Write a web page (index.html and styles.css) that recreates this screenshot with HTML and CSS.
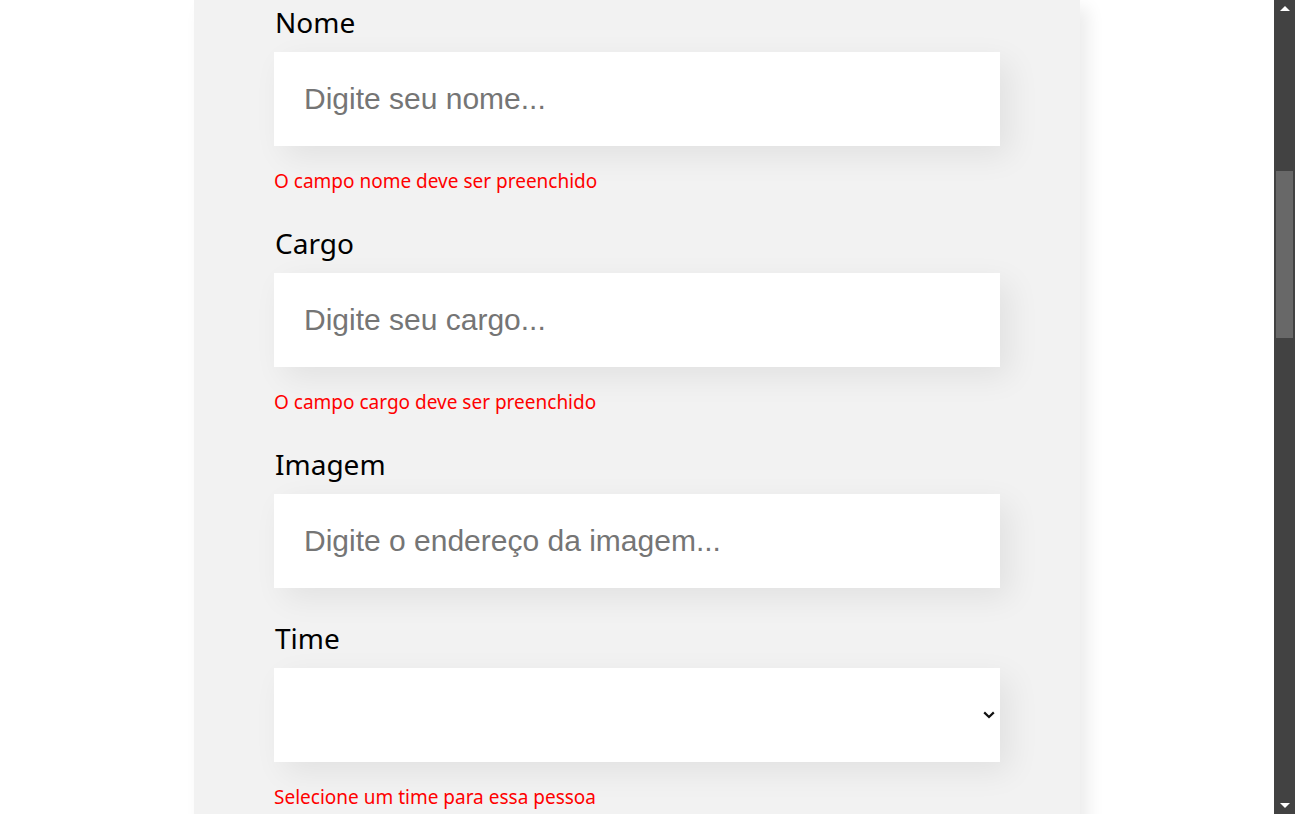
FILE: index.html
```html
<!DOCTYPE html>
<html lang="pt-BR">
<head>
<meta charset="utf-8">
<title>Formulário</title>
<link rel="stylesheet" href="styles.css">
</head>
<body>
<div class="window">
  <main class="viewport">
    <form class="panel">
      <div class="field">
        <label class="label" for="nome">Nome</label>
        <input class="input" id="nome" type="text" placeholder="Digite seu nome...">
        <p class="error">O campo nome deve ser preenchido</p>
      </div>
      <div class="field">
        <label class="label" for="cargo">Cargo</label>
        <input class="input" id="cargo" type="text" placeholder="Digite seu cargo...">
        <p class="error">O campo cargo deve ser preenchido</p>
      </div>
      <div class="field">
        <label class="label" for="imagem">Imagem</label>
        <input class="input" id="imagem" type="text" placeholder="Digite o endereço da imagem...">
      </div>
      <div class="field">
        <label class="label" for="time">Time</label>
        <div class="select-wrap">
          <select class="input select" id="time">
            <option value=""></option>
          </select>
          <svg class="chevron" width="12" height="8" viewBox="0 0 12 8" aria-hidden="true">
            <path d="M1.2 1.4 L6 6 L10.8 1.4" fill="none" stroke="#111" stroke-width="2.2" stroke-linecap="butt" stroke-linejoin="miter"/>
          </svg>
        </div>
        <p class="error">Selecione um time para essa pessoa</p>
      </div>
    </form>
  </main>
  <div class="scrollbar">
    <div class="sb-btn"><span class="arrow-up"></span></div>
    <div class="sb-track"><div class="sb-thumb"></div></div>
    <div class="sb-btn"><span class="arrow-down"></span></div>
  </div>
</div>
</body>
</html>
```
FILE: styles.css
```css
html, body {
  margin: 0;
  padding: 0;
  height: 814px;
  overflow: hidden;
  background: #ffffff;
}

.window {
  display: flex;
  height: 814px;
}

.viewport {
  flex: 1;
  overflow: hidden;
  height: 814px;
}

.panel {
  width: 886px;
  box-sizing: border-box;
  margin: 0 auto;
  padding: 6px 80px 0;
  min-height: 900px;
  background: #f2f2f2;
  box-shadow: 8px 8px 16px rgba(0, 0, 0, 0.08);
  font-family: "Noto Sans", "Open Sans", sans-serif;
}

.field {
  margin-bottom: 34px;
}

.label {
  display: block;
  font-size: 28px;
  line-height: 32px;
  color: #000;
  margin-bottom: 14px;
  padding-left: 1px;
}

.input {
  display: block;
  width: 100%;
  height: 94px;
  box-sizing: border-box;
  border: none;
  outline: none;
  background: #ffffff;
  padding: 0 30px;
  font-family: "Liberation Sans", Arial, sans-serif;
  font-size: 30px;
  color: #000;
  box-shadow: 10px 10px 30px rgba(0, 0, 0, 0.07);
}

.input::placeholder {
  color: #757575;
}

.select-wrap {
  position: relative;
}

.select {
  appearance: none;
  -webkit-appearance: none;
  border-radius: 0;
  padding: 0 30px 0 30px;
}

.chevron {
  position: absolute;
  right: 5px;
  top: 43px;
  pointer-events: none;
}

.error {
  margin: 24px 0 0;
  font-size: 19px;
  line-height: 23px;
  color: #ff0000;
}

.scrollbar {
  width: 21px;
  flex: none;
  height: 814px;
  background: #424242;
  display: flex;
  flex-direction: column;
}

.sb-btn {
  height: 17px;
  display: flex;
  align-items: center;
  justify-content: center;
}

.arrow-up {
  width: 0;
  height: 0;
  border-left: 5px solid transparent;
  border-right: 5px solid transparent;
  border-bottom: 5px solid #ffffff;
}

.arrow-down {
  width: 0;
  height: 0;
  border-left: 5px solid transparent;
  border-right: 5px solid transparent;
  border-top: 5px solid #ffffff;
}

.sb-track {
  flex: 1;
}

.sb-thumb {
  margin: 154px 2px 0;
  height: 167px;
  background: #686868;
}
```
